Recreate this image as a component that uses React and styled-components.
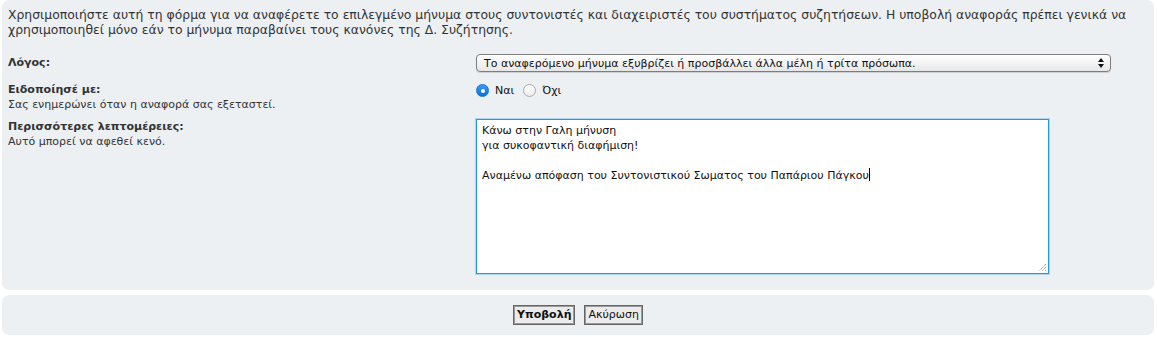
import React from "react";
import styled, { createGlobalStyle } from "styled-components";

const GlobalStyle = createGlobalStyle`
  body {
    margin: 0;
    background: #ffffff;
    font-family: "DejaVu Sans", Verdana, sans-serif;
    color: #333333;
  }
`;

const Page = styled.div`
  display: flex;
  flex-direction: column;
  gap: 5px;
  padding: 0 3px 0 2px;
`;

const Panel = styled.div`
  background: #ecf0f3;
  border-radius: 7px;
  padding: ${props => props.padding};
  display: flex;
  flex-direction: column;
  align-items: ${props => (props.center ? "center" : "stretch")};
`;

const Intro = styled.p`
  margin: 0 0 17px 0;
  font-size: 12.4px;
  line-height: 15px;
`;

const Row = styled.div`
  display: flex;
  margin-bottom: ${props => props.gap || "0px"};
`;

const Term = styled.div`
  width: 468px;
  flex-shrink: 0;
  font-size: 11px;
  line-height: 15px;
  padding-top: ${props => props.top || "0px"};
`;

const Label = styled.div`
  font-weight: bold;
`;

const Explain = styled.div``;

const Field = styled.div`
  flex: 1;
  display: flex;
  align-items: ${props => (props.top ? "flex-start" : "center")};
  font-size: 11px;
`;

const SelectBox = styled.div`
  width: 635px;
  height: 18px;
  box-sizing: border-box;
  border: 1px solid #7d7d7d;
  border-radius: 4px;
  background: linear-gradient(#ffffff, #f1f1f1 60%, #e6e6e6);
  box-shadow: 0 1px 1px rgba(0, 0, 0, 0.15);
  display: flex;
  align-items: center;
  justify-content: space-between;
  padding: 0 6px 0 7px;
  font-size: 11px;
  color: #111;
`;

const RadioGroup = styled.div`
  display: flex;
  align-items: center;
  padding-top: 2px;
`;

const RadioDot = styled.span`
  width: 13px;
  height: 13px;
  border-radius: 50%;
  box-sizing: border-box;
  display: inline-flex;
  align-items: center;
  justify-content: center;
  margin-right: 6px;
  background: ${props => (props.checked ? "linear-gradient(#3d9cf7, #0a6fe0)" : "linear-gradient(#ffffff, #ececec)")};
  border: 1px solid ${props => (props.checked ? "#1a6fd6" : "#a9a9a9")};

  &::after {
    content: "";
    width: 4px;
    height: 4px;
    border-radius: 50%;
    background: #ffffff;
    display: ${props => (props.checked ? "block" : "none")};
  }
`;

const RadioText = styled.span`
  font-size: 11px;
  color: #111;
  margin-right: 9px;
`;

const TextArea = styled.div`
  width: 573px;
  height: 155px;
  box-sizing: border-box;
  border: 1px solid #1f9be6;
  box-shadow: 0 0 0 1px rgba(31, 155, 230, 0.3);
  background: #ffffff;
  padding: 3px 5px;
  font-size: 11px;
  line-height: 15px;
  color: #111;
  position: relative;
  align-self: flex-start;
`;

const Line = styled.div`
  min-height: 15px;
  white-space: nowrap;
`;

const Caret = styled.span`
  display: inline-block;
  width: 1px;
  height: 13px;
  background: #000;
  vertical-align: -2px;
`;

const Grip = styled.svg`
  position: absolute;
  right: 1px;
  bottom: 1px;
`;

const Buttons = styled.div`
  display: flex;
  gap: 9px;
`;

const Button = styled.button`
  font-family: "DejaVu Sans", Verdana, sans-serif;
  font-size: 11px;
  font-weight: ${props => (props.primary ? "bold" : "normal")};
  color: #111;
  background: #ececec;
  border: 1px solid #666666;
  box-shadow: inset 0 0 0 1px #9a9a9a;
  height: 20px;
  padding: 0 3px;
  line-height: 14px;
`;

const Arrows = () => (
  <svg width="6" height="10" viewBox="0 0 6 10">
    <path d="M3 0 L6 4 L0 4 Z" fill="#111" />
    <path d="M3 10 L6 6 L0 6 Z" fill="#111" />
  </svg>
);

export default function App() {
  return (
    <>
      <GlobalStyle />
      <Page>
        <Panel padding="7px 6px 16px 6px">
          <Intro>
            Χρησιμοποιήστε αυτή τη φόρμα για να αναφέρετε το επιλεγμένο μήνυμα στους συντονιστές και διαχειριστές του συστήματος συζητήσεων. Η υποβολή αναφοράς πρέπει γενικά να χρησιμοποιηθεί μόνο εάν το μήνυμα παραβαίνει τους κανόνες της Δ. Συζήτησης.
          </Intro>

          <Row gap="10px">
            <Term top="1px">
              <Label>Λόγος:</Label>
            </Term>
            <Field>
              <SelectBox>
                <span>Το αναφερόμενο μήνυμα εξυβρίζει ή προσβάλλει άλλα μέλη ή τρίτα πρόσωπα.</span>
                <Arrows />
              </SelectBox>
            </Field>
          </Row>

          <Row gap="7px">
            <Term>
              <Label>Ειδοποίησέ με:</Label>
              <Explain>Σας ενημερώνει όταν η αναφορά σας εξεταστεί.</Explain>
            </Term>
            <Field top>
              <RadioGroup>
                <RadioDot checked />
                <RadioText>Ναι</RadioText>
                <RadioDot />
                <RadioText>Όχι</RadioText>
              </RadioGroup>
            </Field>
          </Row>

          <Row>
            <Term>
              <Label>Περισσότερες λεπτομέρειες:</Label>
              <Explain>Αυτό μπορεί να αφεθεί κενό.</Explain>
            </Term>
            <Field>
              <TextArea>
                <Line>Κάνω στην Γαλη μήνυση</Line>
                <Line>για συκοφαντική διαφήμιση!</Line>
                <Line />
                <Line>
                  Αναμένω απόφαση του Συντονιστικού Σωματος του Παπάριου Πάγκου<Caret />
                </Line>
                <Grip width="10" height="10" viewBox="0 0 10 10">
                  <path d="M9 2 L2 9 M9 5 L5 9 M9 8 L8 9" stroke="#777" strokeWidth="1" strokeDasharray="1 1" />
                </Grip>
              </TextArea>
            </Field>
          </Row>
        </Panel>

        <Panel padding="10px 6px 10px 6px" center>
          <Buttons>
            <Button primary>Υποβολή</Button>
            <Button>Ακύρωση</Button>
          </Buttons>
        </Panel>
      </Page>
    </>
  );
}
